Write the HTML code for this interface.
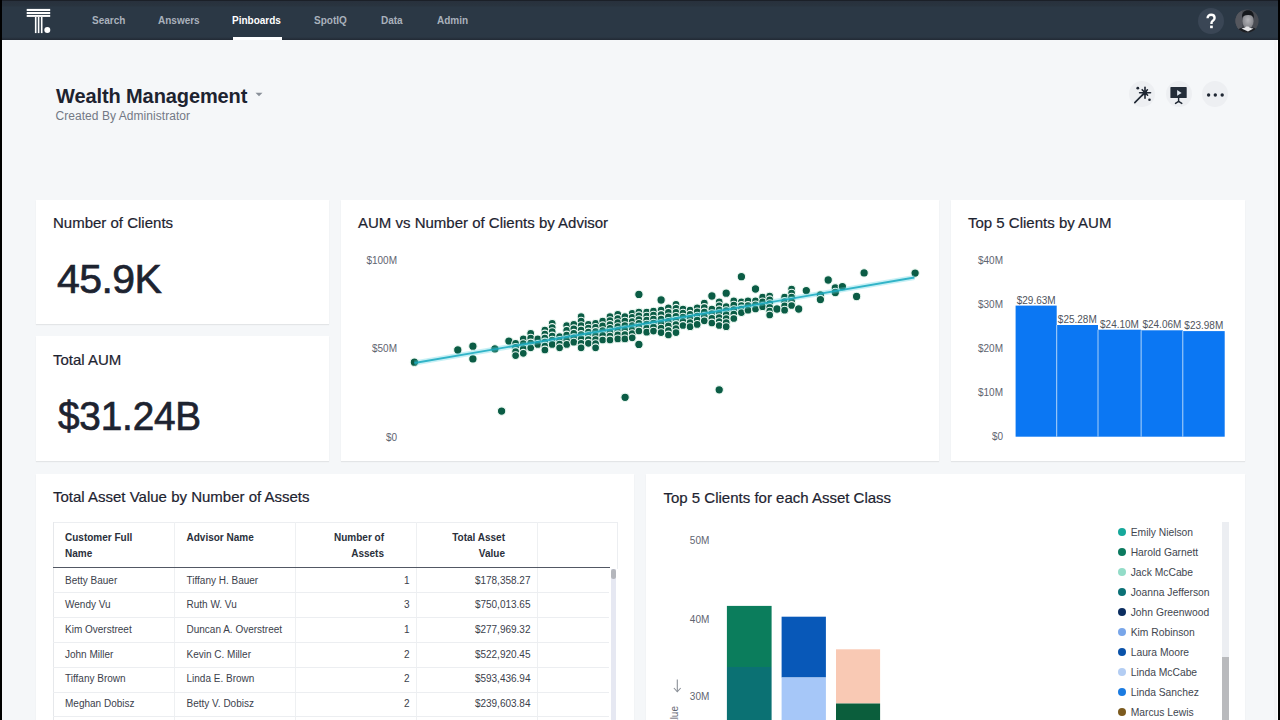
<!DOCTYPE html>
<html><head><meta charset="utf-8">
<style>
*{margin:0;padding:0;box-sizing:border-box}
html,body{width:1280px;height:720px;overflow:hidden}
body{background:#f5f7f9;font-family:"Liberation Sans",sans-serif;position:relative;color:#1d2330}
.abs{position:absolute}
#lb{left:0;top:0;width:2px;height:720px;background:#000}
#rb{left:1278px;top:0;width:2px;height:720px;background:#000}
#nav{left:2px;top:0;width:1276px;height:40px;background:linear-gradient(#1b2028 0px,#1b2028 1px,#28313d 1px,#29343f 6px,#2b3845 7px,#2b3845 37px,#28333f 38px,#222a34 40px);}
.nv{position:absolute;top:15px;font-size:10px;font-weight:bold;color:#a9b1bc;line-height:12px;white-space:nowrap}
.card{position:absolute;background:#fff;box-shadow:0 1px 1px rgba(0,0,0,0.07)}
.ttl{position:absolute;font-size:15px;color:#1d2330;white-space:nowrap;line-height:18px;-webkit-text-stroke:0.2px #1d2330}
.kpi{position:absolute;font-size:41px;color:#1d2330;white-space:nowrap;line-height:46px;letter-spacing:-0.6px;-webkit-text-stroke:0.7px #1d2330}
.ax{position:absolute;font-size:10px;color:#5f6571;white-space:nowrap;line-height:12px}
</style></head>
<body>
<div id="lb" class="abs"></div>
<div id="rb" class="abs"></div>
<div class="abs" style="left:1273.5px;top:40px;width:3px;height:680px;background:#f2f3f5"></div>
<div class="abs" style="left:1276.5px;top:40px;width:1.5px;height:680px;background:#ffffff"></div>
<div id="nav" class="abs">
  <!-- logo -->
  <svg class="abs" style="left:-2px;top:0px" width="60" height="40" viewBox="0 0 60 40">
    <rect x="26.7" y="8.9" width="23.5" height="2.1" fill="#fff"/>
    <rect x="26.7" y="12" width="23.5" height="2" fill="#fff"/>
    <rect x="26.7" y="14.9" width="23.5" height="2" fill="#fff"/>
    <rect x="34.9" y="17" width="1.6" height="16.1" fill="#fff"/>
    <rect x="37.8" y="17" width="1.6" height="16.1" fill="#fff"/>
    <rect x="40.9" y="17" width="1.6" height="16.1" fill="#fff"/>
    <circle cx="47.3" cy="30" r="3" fill="#fff"/>
  </svg>
  <div class="nv" style="left:90px">Search</div>
  <div class="nv" style="left:156px">Answers</div>
  <div class="nv" style="left:230px;color:#fff">Pinboards</div>
  <div class="abs" style="left:230.6px;top:37px;width:49px;height:3px;background:#fff"></div>
  <div class="nv" style="left:312px">SpotIQ</div>
  <div class="nv" style="left:379px">Data</div>
  <div class="nv" style="left:435px">Admin</div>
  <div class="abs" style="left:1196px;top:7.5px;width:26px;height:26px;border-radius:50%;background:#3a4655"></div>
  <svg class="abs" style="left:1196px;top:7.5px" width="26" height="26" viewBox="0 0 26 26">
    <path d="M9.6 10.2 C9.6 7.9 11.2 6.8 13.1 6.8 C15.1 6.8 16.6 8 16.6 9.9 C16.6 11.5 15.6 12.2 14.6 12.9 C13.8 13.5 13.5 13.9 13.5 15.1 L13.5 15.9" stroke="#fff" stroke-width="2.4" fill="none" stroke-linecap="butt"/>
    <rect x="12.1" y="17.6" width="2.7" height="2.6" fill="#fff"/>
  </svg>
  <svg class="abs" style="left:1232.5px;top:8.5px" width="24" height="24" viewBox="0 0 24 24">
    <defs><clipPath id="av"><circle cx="12" cy="12" r="11.6"/></clipPath>
    <radialGradient id="fg" cx="0.5" cy="0.45" r="0.6"><stop offset="0" stop-color="#b4b4b8"/><stop offset="1" stop-color="#7c7d83"/></radialGradient></defs>
    <g clip-path="url(#av)">
      <rect width="24" height="24" fill="#484b52"/>
      <rect x="0" y="0" width="7" height="24" fill="#55575e"/>
      <ellipse cx="13" cy="12" rx="5.6" ry="7.4" fill="url(#fg)"/>
      <path d="M7 9 C6.6 3.5 9.5 1.2 13 1.2 C16.6 1.2 19.4 3.5 18.8 9.5 C18 6.8 16.5 5.8 13 5.9 C9.6 6 8 6.6 7 9 Z" fill="#15181c"/>
      <path d="M1 24 C2 20.5 5 19 8 18.6 L12.5 20.8 L17.6 18.6 C20 19 22.5 20.5 23.5 24 Z" fill="#1c1f24"/>
      <path d="M6.5 19.5 C9 19 10.5 18.5 11 17.5 L13.5 17.5 C14.5 19 16 19.2 18.5 19.6 L13 22.5 Z" fill="#e6e6e8"/>
    </g>
  </svg>
</div>

<div class="abs" style="left:56px;top:85px;font-size:20px;font-weight:bold;color:#1d2330;line-height:22px;white-space:nowrap;letter-spacing:-0.1px">Wealth Management</div>
<svg class="abs" style="left:254px;top:92px" width="10" height="5"><path d="M1.5 0.8 L8.5 0.8 L5 4.2 Z" fill="#8a9099"/></svg>
<div class="abs" style="left:55.5px;top:108.5px;font-size:12px;color:#737985;line-height:14px;white-space:nowrap;letter-spacing:0.05px">Created By Administrator</div>


<!-- action buttons -->
<div class="abs" style="left:1128.5px;top:80.5px;width:26px;height:26px;border-radius:50%;background:#edeff2"></div>
<div class="abs" style="left:1165.8px;top:80.5px;width:26px;height:26px;border-radius:50%;background:#edeff2"></div>
<div class="abs" style="left:1202px;top:80.5px;width:26px;height:26px;border-radius:50%;background:#edeff2"></div>
<svg class="abs" style="left:1128.5px;top:80.5px" width="26" height="26" viewBox="0 0 26 26">
  <g stroke="#1f2733" stroke-width="1.6" stroke-linecap="round" fill="none">
    <line x1="5.8" y1="21.6" x2="14.2" y2="13.1"/>
    <line x1="16" y1="6.4" x2="16" y2="17.2"/>
    <line x1="10.6" y1="11.8" x2="21.5" y2="11.8"/>
    <line x1="13.2" y1="8.7" x2="18.6" y2="14.2"/>
    <line x1="18.4" y1="8.8" x2="13.4" y2="14.3"/>
  </g>
  <circle cx="16" cy="11.8" r="2.4" fill="#1f2733"/>
  <circle cx="8.8" cy="7.2" r="1.4" fill="#1f2733"/>
  <circle cx="20.5" cy="18.7" r="1.3" fill="#1f2733"/>
</svg>
<svg class="abs" style="left:1165.8px;top:80.5px" width="26" height="26" viewBox="0 0 26 26">
  <rect x="4.4" y="6.1" width="16.3" height="11" rx="0.6" fill="#232c38"/>
  <path d="M11.1 9 L11.1 14.8 L15.6 11.9 Z" fill="#dfe6ee"/>
  <g stroke="#1f2733" stroke-width="1.4" stroke-linecap="round" fill="none">
    <line x1="12.6" y1="17" x2="12.6" y2="20.6"/>
    <line x1="12.6" y1="20.4" x2="9.5" y2="22.4"/>
    <line x1="12.6" y1="20.4" x2="15.8" y2="22.4"/>
  </g>
</svg>
<svg class="abs" style="left:1202px;top:80.5px" width="26" height="26" viewBox="0 0 26 26">
  <circle cx="6.6" cy="14" r="1.7" fill="#1f2733"/>
  <circle cx="13.3" cy="14" r="1.7" fill="#1f2733"/>
  <circle cx="20.2" cy="14" r="1.7" fill="#1f2733"/>
</svg>

<!-- cards -->
<div class="card" style="left:36px;top:200px;width:293px;height:124px">
  <div class="ttl" style="left:17px;top:14px">Number of Clients</div>
  <div class="kpi" style="left:21px;top:56px">45.9K</div>
</div>
<div class="card" style="left:36px;top:336px;width:293px;height:125px">
  <div class="ttl" style="left:17px;top:14.5px">Total AUM</div>
  <div class="kpi" style="left:21.5px;top:57px;letter-spacing:-0.2px;transform:scaleX(0.945);transform-origin:0 0">$31.24B</div>
</div>
<div class="card" style="left:341px;top:200px;width:598px;height:261px">
  <div class="ttl" style="left:17px;top:14px">AUM vs Number of Clients by Advisor</div>
  <div class="ax" style="right:542px;top:55px">$100M</div>
  <div class="ax" style="right:542px;top:143px">$50M</div>
  <div class="ax" style="right:542px;top:232px">$0</div>
  <svg class="abs" style="left:0;top:0" width="598" height="261" viewBox="0 0 598 261">
  <g fill="#0b5c45" stroke="#eef9f3" stroke-width="1.1"><circle cx="73.4" cy="162.2" r="4.2"/><circle cx="116.8" cy="150.0" r="4.2"/><circle cx="131.9" cy="146.2" r="4.2"/><circle cx="131.9" cy="158.9" r="4.2"/><circle cx="153.9" cy="148.9" r="4.2"/><circle cx="160.6" cy="211.1" r="4.2"/><circle cx="167.9" cy="141.1" r="4.2"/><circle cx="174.6" cy="143.3" r="3.9"/><circle cx="174.6" cy="147.4" r="3.9"/><circle cx="174.6" cy="151.5" r="3.9"/><circle cx="174.6" cy="155.6" r="3.9"/><circle cx="182.3" cy="138.9" r="3.9"/><circle cx="182.3" cy="143.7" r="3.9"/><circle cx="182.3" cy="148.5" r="3.9"/><circle cx="182.3" cy="153.3" r="3.9"/><circle cx="189.7" cy="133.3" r="3.9"/><circle cx="189.7" cy="138.1" r="3.9"/><circle cx="189.7" cy="143.0" r="3.9"/><circle cx="189.7" cy="147.8" r="3.9"/><circle cx="196.8" cy="138.9" r="3.9"/><circle cx="196.8" cy="144.4" r="3.9"/><circle cx="203.9" cy="130.0" r="3.9"/><circle cx="203.9" cy="134.0" r="3.9"/><circle cx="203.9" cy="138.0" r="3.9"/><circle cx="203.9" cy="142.0" r="3.9"/><circle cx="203.9" cy="146.0" r="3.9"/><circle cx="203.9" cy="150.0" r="3.9"/><circle cx="211.2" cy="123.3" r="3.9"/><circle cx="211.2" cy="127.5" r="3.9"/><circle cx="211.2" cy="131.7" r="3.9"/><circle cx="211.2" cy="136.0" r="3.9"/><circle cx="211.2" cy="140.2" r="3.9"/><circle cx="211.2" cy="144.4" r="3.9"/><circle cx="218.6" cy="136.7" r="3.9"/><circle cx="218.6" cy="140.4" r="3.9"/><circle cx="218.6" cy="144.1" r="3.9"/><circle cx="218.6" cy="147.8" r="3.9"/><circle cx="225.7" cy="125.6" r="3.9"/><circle cx="225.7" cy="130.3" r="3.9"/><circle cx="225.7" cy="135.0" r="3.9"/><circle cx="225.7" cy="139.7" r="3.9"/><circle cx="225.7" cy="144.4" r="3.9"/><circle cx="232.8" cy="124.4" r="3.9"/><circle cx="232.8" cy="128.8" r="3.9"/><circle cx="232.8" cy="133.3" r="3.9"/><circle cx="232.8" cy="137.8" r="3.9"/><circle cx="232.8" cy="142.2" r="3.9"/><circle cx="240.1" cy="116.7" r="3.9"/><circle cx="240.1" cy="121.1" r="3.9"/><circle cx="240.1" cy="125.6" r="3.9"/><circle cx="240.1" cy="130.0" r="3.9"/><circle cx="240.1" cy="134.5" r="3.9"/><circle cx="240.1" cy="138.9" r="3.9"/><circle cx="240.1" cy="143.4" r="3.9"/><circle cx="240.1" cy="147.8" r="3.9"/><circle cx="247.4" cy="124.4" r="3.9"/><circle cx="247.4" cy="128.2" r="3.9"/><circle cx="247.4" cy="132.0" r="3.9"/><circle cx="247.4" cy="135.7" r="3.9"/><circle cx="247.4" cy="139.5" r="3.9"/><circle cx="247.4" cy="143.3" r="3.9"/><circle cx="254.6" cy="123.3" r="3.9"/><circle cx="254.6" cy="127.4" r="3.9"/><circle cx="254.6" cy="131.5" r="3.9"/><circle cx="254.6" cy="135.6" r="3.9"/><circle cx="254.6" cy="139.6" r="3.9"/><circle cx="254.6" cy="143.7" r="3.9"/><circle cx="254.6" cy="147.8" r="3.9"/><circle cx="261.7" cy="121.1" r="3.9"/><circle cx="261.7" cy="125.8" r="3.9"/><circle cx="261.7" cy="130.6" r="3.9"/><circle cx="261.7" cy="135.3" r="3.9"/><circle cx="261.7" cy="140.0" r="3.9"/><circle cx="269.0" cy="116.7" r="3.9"/><circle cx="269.0" cy="120.6" r="3.9"/><circle cx="269.0" cy="124.5" r="3.9"/><circle cx="269.0" cy="128.4" r="3.9"/><circle cx="269.0" cy="132.2" r="3.9"/><circle cx="269.0" cy="136.1" r="3.9"/><circle cx="269.0" cy="140.0" r="3.9"/><circle cx="276.8" cy="114.4" r="3.9"/><circle cx="276.8" cy="118.5" r="3.9"/><circle cx="276.8" cy="122.6" r="3.9"/><circle cx="276.8" cy="126.6" r="3.9"/><circle cx="276.8" cy="130.7" r="3.9"/><circle cx="276.8" cy="134.8" r="3.9"/><circle cx="276.8" cy="138.9" r="3.9"/><circle cx="283.9" cy="116.7" r="3.9"/><circle cx="283.9" cy="121.1" r="3.9"/><circle cx="283.9" cy="125.6" r="3.9"/><circle cx="283.9" cy="130.0" r="3.9"/><circle cx="283.9" cy="134.5" r="3.9"/><circle cx="283.9" cy="138.9" r="3.9"/><circle cx="284.1" cy="197.3" r="4.2"/><circle cx="291.2" cy="113.3" r="3.9"/><circle cx="291.2" cy="117.4" r="3.9"/><circle cx="291.2" cy="121.5" r="3.9"/><circle cx="291.2" cy="125.6" r="3.9"/><circle cx="291.2" cy="129.6" r="3.9"/><circle cx="291.2" cy="133.7" r="3.9"/><circle cx="291.2" cy="137.8" r="3.9"/><circle cx="297.9" cy="94.4" r="4.2"/><circle cx="297.9" cy="112.0" r="3.9"/><circle cx="297.9" cy="115.8" r="3.9"/><circle cx="297.9" cy="119.6" r="3.9"/><circle cx="297.9" cy="123.4" r="3.9"/><circle cx="297.9" cy="127.2" r="3.9"/><circle cx="297.9" cy="131.0" r="3.9"/><circle cx="297.9" cy="144.4" r="4.2"/><circle cx="305.7" cy="112.2" r="3.9"/><circle cx="305.7" cy="116.2" r="3.9"/><circle cx="305.7" cy="120.2" r="3.9"/><circle cx="305.7" cy="124.2" r="3.9"/><circle cx="305.7" cy="128.2" r="3.9"/><circle cx="305.7" cy="132.2" r="3.9"/><circle cx="312.5" cy="111.1" r="3.9"/><circle cx="312.5" cy="115.1" r="3.9"/><circle cx="312.5" cy="119.1" r="3.9"/><circle cx="312.5" cy="123.1" r="3.9"/><circle cx="312.5" cy="127.1" r="3.9"/><circle cx="312.5" cy="131.1" r="3.9"/><circle cx="320.1" cy="100.0" r="4.2"/><circle cx="320.1" cy="110.0" r="3.9"/><circle cx="320.1" cy="114.5" r="3.9"/><circle cx="320.1" cy="119.0" r="3.9"/><circle cx="320.1" cy="123.6" r="3.9"/><circle cx="320.1" cy="128.1" r="3.9"/><circle cx="320.1" cy="132.6" r="3.9"/><circle cx="327.4" cy="107.8" r="3.9"/><circle cx="327.4" cy="112.3" r="3.9"/><circle cx="327.4" cy="116.9" r="3.9"/><circle cx="327.4" cy="121.4" r="3.9"/><circle cx="327.4" cy="125.9" r="3.9"/><circle cx="327.4" cy="130.5" r="3.9"/><circle cx="327.4" cy="135.0" r="3.9"/><circle cx="335.0" cy="104.3" r="3.9"/><circle cx="335.0" cy="108.3" r="3.9"/><circle cx="335.0" cy="112.4" r="3.9"/><circle cx="335.0" cy="116.4" r="3.9"/><circle cx="335.0" cy="120.5" r="3.9"/><circle cx="335.0" cy="124.5" r="3.9"/><circle cx="335.0" cy="128.6" r="3.9"/><circle cx="335.0" cy="132.6" r="3.9"/><circle cx="342.0" cy="109.0" r="3.9"/><circle cx="342.0" cy="113.1" r="3.9"/><circle cx="342.0" cy="117.2" r="3.9"/><circle cx="342.0" cy="121.4" r="3.9"/><circle cx="342.0" cy="125.5" r="3.9"/><circle cx="349.1" cy="110.2" r="3.9"/><circle cx="349.1" cy="114.3" r="3.9"/><circle cx="349.1" cy="118.4" r="3.9"/><circle cx="349.1" cy="122.6" r="3.9"/><circle cx="349.1" cy="126.7" r="3.9"/><circle cx="356.2" cy="107.8" r="3.9"/><circle cx="356.2" cy="111.9" r="3.9"/><circle cx="356.2" cy="116.1" r="3.9"/><circle cx="356.2" cy="120.2" r="3.9"/><circle cx="356.2" cy="124.4" r="3.9"/><circle cx="363.3" cy="103.1" r="3.9"/><circle cx="363.3" cy="107.5" r="3.9"/><circle cx="363.3" cy="112.0" r="3.9"/><circle cx="363.3" cy="116.4" r="3.9"/><circle cx="363.3" cy="120.8" r="3.9"/><circle cx="370.9" cy="96.0" r="4.2"/><circle cx="370.9" cy="109.0" r="3.9"/><circle cx="370.9" cy="113.7" r="3.9"/><circle cx="370.9" cy="118.3" r="3.9"/><circle cx="370.9" cy="123.0" r="3.9"/><circle cx="378.2" cy="101.9" r="3.9"/><circle cx="378.2" cy="105.8" r="3.9"/><circle cx="378.2" cy="109.8" r="3.9"/><circle cx="378.2" cy="113.7" r="3.9"/><circle cx="378.2" cy="117.6" r="3.9"/><circle cx="378.2" cy="121.6" r="3.9"/><circle cx="378.2" cy="125.5" r="3.9"/><circle cx="378.2" cy="189.8" r="4.2"/><circle cx="385.2" cy="93.2" r="4.2"/><circle cx="385.2" cy="106.7" r="3.9"/><circle cx="385.2" cy="110.7" r="3.9"/><circle cx="385.2" cy="114.7" r="3.9"/><circle cx="385.2" cy="118.7" r="3.9"/><circle cx="385.2" cy="122.7" r="3.9"/><circle cx="385.2" cy="126.7" r="3.9"/><circle cx="392.8" cy="100.8" r="3.9"/><circle cx="392.8" cy="105.2" r="3.9"/><circle cx="392.8" cy="109.6" r="3.9"/><circle cx="392.8" cy="114.1" r="3.9"/><circle cx="392.8" cy="118.5" r="3.9"/><circle cx="400.4" cy="76.7" r="4.2"/><circle cx="400.4" cy="101.9" r="3.9"/><circle cx="400.4" cy="105.5" r="3.9"/><circle cx="400.4" cy="109.0" r="3.9"/><circle cx="400.4" cy="112.6" r="3.9"/><circle cx="407.0" cy="100.8" r="3.9"/><circle cx="407.0" cy="105.5" r="3.9"/><circle cx="407.0" cy="110.2" r="3.9"/><circle cx="414.5" cy="89.0" r="4.2"/><circle cx="414.5" cy="100.8" r="3.9"/><circle cx="414.5" cy="104.9" r="3.9"/><circle cx="414.5" cy="109.0" r="3.9"/><circle cx="421.6" cy="97.2" r="3.9"/><circle cx="421.6" cy="101.9" r="3.9"/><circle cx="421.6" cy="106.7" r="3.9"/><circle cx="428.7" cy="96.0" r="3.9"/><circle cx="428.7" cy="99.8" r="3.9"/><circle cx="428.7" cy="103.6" r="3.9"/><circle cx="428.7" cy="107.4" r="3.9"/><circle cx="428.7" cy="111.2" r="3.9"/><circle cx="428.7" cy="115.0" r="3.9"/><circle cx="436.0" cy="109.0" r="4.2"/><circle cx="443.6" cy="97.2" r="3.9"/><circle cx="443.6" cy="101.5" r="3.9"/><circle cx="443.6" cy="105.9" r="3.9"/><circle cx="443.6" cy="110.2" r="3.9"/><circle cx="450.6" cy="89.0" r="3.9"/><circle cx="450.6" cy="93.1" r="3.9"/><circle cx="450.6" cy="97.2" r="3.9"/><circle cx="450.6" cy="101.4" r="3.9"/><circle cx="450.6" cy="105.5" r="3.9"/><circle cx="457.7" cy="109.0" r="4.2"/><circle cx="465.3" cy="90.6" r="4.2"/><circle cx="479.4" cy="94.9" r="4.2"/><circle cx="479.4" cy="99.6" r="4.2"/><circle cx="487.2" cy="80.0" r="4.2"/><circle cx="494.3" cy="87.8" r="4.2"/><circle cx="494.3" cy="92.5" r="4.2"/><circle cx="501.4" cy="86.6" r="4.2"/><circle cx="515.6" cy="96.5" r="4.2"/><circle cx="523.1" cy="72.9" r="4.2"/><circle cx="574.1" cy="73.1" r="4.2"/></g>
  <line x1="73.39999999999998" y1="163" x2="573.4" y2="77.5" stroke="#5fd3e3" stroke-width="5" stroke-opacity="0.35"/>
  <line x1="73.39999999999998" y1="163" x2="573.4" y2="77.5" stroke="#17a9bf" stroke-width="1.8" stroke-opacity="0.85"/>
</svg>
</div>
<div class="card" style="left:951px;top:200px;width:294px;height:261px">
  <div class="ttl" style="left:17px;top:14px">Top 5 Clients by AUM</div>
  <div class="ax" style="right:242px;top:55px">$40M</div>
  <div class="ax" style="right:242px;top:99px">$30M</div>
  <div class="ax" style="right:242px;top:143px">$20M</div>
  <div class="ax" style="right:242px;top:187px">$10M</div>
  <div class="ax" style="right:242px;top:231px">$0</div>
  <svg class="abs" style="left:0;top:0" width="294" height="261"><g fill="#0b77f3"><rect x="64.6" y="105.6" width="41.1" height="131.1"/><rect x="105.7" y="125.0" width="41.3" height="111.7"/><rect x="147.0" y="129.7" width="43.1" height="107.0"/><rect x="190.1" y="130.3" width="41.7" height="106.4"/><rect x="231.8" y="131.1" width="41.9" height="105.6"/></g><rect x="105.2" y="125.0" width="1" height="111.7" fill="#a8cff8"/><rect x="146.5" y="129.7" width="1" height="107.0" fill="#a8cff8"/><rect x="189.6" y="130.3" width="1" height="106.4" fill="#a8cff8"/><rect x="231.3" y="131.1" width="1" height="105.6" fill="#a8cff8"/></svg>
  <div class="ax" style="left:60.2px;width:50px;text-align:center;top:94.6px;color:#4f545d">$29.63M</div><div class="ax" style="left:101.3px;width:50px;text-align:center;top:114.0px;color:#4f545d">$25.28M</div><div class="ax" style="left:143.5px;width:50px;text-align:center;top:118.7px;color:#4f545d">$24.10M</div><div class="ax" style="left:185.9px;width:50px;text-align:center;top:119.3px;color:#4f545d">$24.06M</div><div class="ax" style="left:227.8px;width:50px;text-align:center;top:120.1px;color:#4f545d">$23.98M</div>
</div>
<div class="card" style="left:36px;top:474px;width:598px;height:260px">
  <div class="ttl" style="left:17px;top:14px">Total Asset Value by Number of Assets</div>
  <div class="abs" style="left:17px;top:47.5px;width:564px;height:1px;background:#eceef1"></div>
  <div class="abs" style="left:16.5px;top:47.5px;width:1px;height:250px;background:#e6e8eb"></div>
  <div class="abs" style="left:580.5px;top:47.5px;width:1px;height:47px;background:#eceef1"></div>
  <div class="abs" style="left:138px;top:48px;width:1px;height:250px;background:#eef0f2"></div>
  <div class="abs" style="left:259px;top:48px;width:1px;height:250px;background:#eef0f2"></div>
  <div class="abs" style="left:380px;top:48px;width:1px;height:250px;background:#eef0f2"></div>
  <div class="abs" style="left:501px;top:48px;width:1px;height:250px;background:#eef0f2"></div>
  <div class="abs" style="left:17px;top:92.60000000000002px;width:557px;height:1.6px;background:#525864"></div>
  <div class="abs" style="left:17px;top:118.0px;width:556px;height:1px;background:#eceef1"></div>
  <div class="abs" style="left:17px;top:143.0px;width:556px;height:1px;background:#eceef1"></div>
  <div class="abs" style="left:17px;top:167.8px;width:556px;height:1px;background:#eceef1"></div>
  <div class="abs" style="left:17px;top:192.6px;width:556px;height:1px;background:#eceef1"></div>
  <div class="abs" style="left:17px;top:217.6px;width:556px;height:1px;background:#eceef1"></div>
  <div class="abs" style="left:17px;top:242.0px;width:556px;height:1px;background:#eceef1"></div>
  <div style="position:absolute;font-size:10px;font-weight:bold;color:#2a303b;line-height:16px;white-space:nowrap;left:29px;top:55.9px">Customer Full<br>Name</div>
  <div style="position:absolute;font-size:10px;font-weight:bold;color:#2a303b;line-height:16px;white-space:nowrap;left:150.5px;top:55.9px">Advisor Name</div>
  <div style="position:absolute;font-size:10px;font-weight:bold;color:#2a303b;line-height:16px;white-space:nowrap;right:250px;top:55.9px;text-align:right">Number of<br>Assets</div>
  <div style="position:absolute;font-size:10px;font-weight:bold;color:#2a303b;line-height:16px;white-space:nowrap;right:129px;top:55.9px;text-align:right">Total Asset<br>Value</div>
  <div style="position:absolute;font-size:10px;color:#3b414c;line-height:16px;white-space:nowrap;left:29px;top:98.6px">Betty Bauer</div>
  <div style="position:absolute;font-size:10px;color:#3b414c;line-height:16px;white-space:nowrap;left:150.5px;top:98.6px">Tiffany H. Bauer</div>
  <div style="position:absolute;font-size:10px;color:#3b414c;line-height:16px;white-space:nowrap;right:224.5px;top:98.6px">1</div>
  <div style="position:absolute;font-size:10px;color:#3b414c;line-height:16px;white-space:nowrap;right:103.5px;top:98.6px">$178,358.27</div>
  <div style="position:absolute;font-size:10px;color:#3b414c;line-height:16px;white-space:nowrap;left:29px;top:123.3px">Wendy Vu</div>
  <div style="position:absolute;font-size:10px;color:#3b414c;line-height:16px;white-space:nowrap;left:150.5px;top:123.3px">Ruth W. Vu</div>
  <div style="position:absolute;font-size:10px;color:#3b414c;line-height:16px;white-space:nowrap;right:224.5px;top:123.3px">3</div>
  <div style="position:absolute;font-size:10px;color:#3b414c;line-height:16px;white-space:nowrap;right:103.5px;top:123.3px">$750,013.65</div>
  <div style="position:absolute;font-size:10px;color:#3b414c;line-height:16px;white-space:nowrap;left:29px;top:148.0px">Kim Overstreet</div>
  <div style="position:absolute;font-size:10px;color:#3b414c;line-height:16px;white-space:nowrap;left:150.5px;top:148.0px">Duncan A. Overstreet</div>
  <div style="position:absolute;font-size:10px;color:#3b414c;line-height:16px;white-space:nowrap;right:224.5px;top:148.0px">1</div>
  <div style="position:absolute;font-size:10px;color:#3b414c;line-height:16px;white-space:nowrap;right:103.5px;top:148.0px">$277,969.32</div>
  <div style="position:absolute;font-size:10px;color:#3b414c;line-height:16px;white-space:nowrap;left:29px;top:172.6px">John Miller</div>
  <div style="position:absolute;font-size:10px;color:#3b414c;line-height:16px;white-space:nowrap;left:150.5px;top:172.6px">Kevin C. Miller</div>
  <div style="position:absolute;font-size:10px;color:#3b414c;line-height:16px;white-space:nowrap;right:224.5px;top:172.6px">2</div>
  <div style="position:absolute;font-size:10px;color:#3b414c;line-height:16px;white-space:nowrap;right:103.5px;top:172.6px">$522,920.45</div>
  <div style="position:absolute;font-size:10px;color:#3b414c;line-height:16px;white-space:nowrap;left:29px;top:197.3px">Tiffany Brown</div>
  <div style="position:absolute;font-size:10px;color:#3b414c;line-height:16px;white-space:nowrap;left:150.5px;top:197.3px">Linda E. Brown</div>
  <div style="position:absolute;font-size:10px;color:#3b414c;line-height:16px;white-space:nowrap;right:224.5px;top:197.3px">2</div>
  <div style="position:absolute;font-size:10px;color:#3b414c;line-height:16px;white-space:nowrap;right:103.5px;top:197.3px">$593,436.94</div>
  <div style="position:absolute;font-size:10px;color:#3b414c;line-height:16px;white-space:nowrap;left:29px;top:222.0px">Meghan Dobisz</div>
  <div style="position:absolute;font-size:10px;color:#3b414c;line-height:16px;white-space:nowrap;left:150.5px;top:222.0px">Betty V. Dobisz</div>
  <div style="position:absolute;font-size:10px;color:#3b414c;line-height:16px;white-space:nowrap;right:224.5px;top:222.0px">2</div>
  <div style="position:absolute;font-size:10px;color:#3b414c;line-height:16px;white-space:nowrap;right:103.5px;top:222.0px">$239,603.84</div>
  <div class="abs" style="left:574.5px;top:95px;width:5.5px;height:200px;background:#e6e8f2"></div>
  <div class="abs" style="left:574.5px;top:95px;width:5.5px;height:9.5px;border-radius:3px;background:#b4b6bc"></div>
</div>
<div class="card" style="left:646px;top:474px;width:599px;height:260px">
  <div class="ttl" style="left:17.5px;top:14.5px">Top 5 Clients for each Asset Class</div>
  <div style="position:absolute;font-size:10px;color:#5f6571;white-space:nowrap;line-height:12px;right:535.7px;top:60.6px">50M</div>
  <div style="position:absolute;font-size:10px;color:#5f6571;white-space:nowrap;line-height:12px;right:535.7px;top:139.8px">40M</div>
  <div style="position:absolute;font-size:10px;color:#5f6571;white-space:nowrap;line-height:12px;right:535.7px;top:216.8px">30M</div>
  <svg class="abs" style="left:0;top:0" width="599" height="260"><rect x="80.9" y="131.9" width="44.7" height="61.1" fill="#0b7d5c"/><rect x="80.9" y="193.0" width="44.7" height="67.0" fill="#0b7173"/><rect x="135.6" y="142.7" width="44.3" height="60.8" fill="#0858b8"/><rect x="135.6" y="203.5" width="44.3" height="56.5" fill="#a6c7f8"/><rect x="190.0" y="175.3" width="44.1" height="54.2" fill="#f9c9b4"/><rect x="190.0" y="229.5" width="44.1" height="30.5" fill="#0b5e3c"/><g stroke="#8a8f97" stroke-width="1.1" fill="none"><line x1="31.299999999999955" y1="205.5" x2="31.299999999999955" y2="217.5"/><path d="M27.899999999999977 214 L31.299999999999955 217.79999999999995 L34.700000000000045 214"/></g></svg>
  <div style="position:absolute;font-size:10px;color:#5f6571;line-height:12px;white-space:nowrap;left:22.6px;top:231.5px;transform-origin:0 0;transform:rotate(-90deg) translate(-40px,0);width:40px;text-align:right">Value</div>
  <div class="abs" style="left:471.9px;top:53.7px;width:8.6px;height:8.6px;border-radius:50%;background:#16a89b"></div>
  <div style="position:absolute;font-size:10.3px;color:#41464f;line-height:12px;white-space:nowrap;left:484.7px;top:52.5px">Emily Nielson</div>
  <div class="abs" style="left:471.9px;top:73.7px;width:8.6px;height:8.6px;border-radius:50%;background:#0b7a5f"></div>
  <div style="position:absolute;font-size:10.3px;color:#41464f;line-height:12px;white-space:nowrap;left:484.7px;top:72.5px">Harold Garnett</div>
  <div class="abs" style="left:471.9px;top:93.7px;width:8.6px;height:8.6px;border-radius:50%;background:#93dcc8"></div>
  <div style="position:absolute;font-size:10.3px;color:#41464f;line-height:12px;white-space:nowrap;left:484.7px;top:92.5px">Jack McCabe</div>
  <div class="abs" style="left:471.9px;top:113.7px;width:8.6px;height:8.6px;border-radius:50%;background:#0b7176"></div>
  <div style="position:absolute;font-size:10.3px;color:#41464f;line-height:12px;white-space:nowrap;left:484.7px;top:112.5px">Joanna Jefferson</div>
  <div class="abs" style="left:471.9px;top:133.7px;width:8.6px;height:8.6px;border-radius:50%;background:#0b2d60"></div>
  <div style="position:absolute;font-size:10.3px;color:#41464f;line-height:12px;white-space:nowrap;left:484.7px;top:132.5px">John Greenwood</div>
  <div class="abs" style="left:471.9px;top:153.7px;width:8.6px;height:8.6px;border-radius:50%;background:#79a6e9"></div>
  <div style="position:absolute;font-size:10.3px;color:#41464f;line-height:12px;white-space:nowrap;left:484.7px;top:152.5px">Kim Robinson</div>
  <div class="abs" style="left:471.9px;top:173.7px;width:8.6px;height:8.6px;border-radius:50%;background:#0a52a9"></div>
  <div style="position:absolute;font-size:10.3px;color:#41464f;line-height:12px;white-space:nowrap;left:484.7px;top:172.5px">Laura Moore</div>
  <div class="abs" style="left:471.9px;top:193.7px;width:8.6px;height:8.6px;border-radius:50%;background:#b3cdf3"></div>
  <div style="position:absolute;font-size:10.3px;color:#41464f;line-height:12px;white-space:nowrap;left:484.7px;top:192.5px">Linda McCabe</div>
  <div class="abs" style="left:471.9px;top:213.7px;width:8.6px;height:8.6px;border-radius:50%;background:#1a7be1"></div>
  <div style="position:absolute;font-size:10.3px;color:#41464f;line-height:12px;white-space:nowrap;left:484.7px;top:212.5px">Linda Sanchez</div>
  <div class="abs" style="left:471.9px;top:233.7px;width:8.6px;height:8.6px;border-radius:50%;background:#7c5b1f"></div>
  <div style="position:absolute;font-size:10.3px;color:#41464f;line-height:12px;white-space:nowrap;left:484.7px;top:232.5px">Marcus Lewis</div>
  <div class="abs" style="left:576.4px;top:48px;width:6.3px;height:250px;background:#eceef2"></div>
  <div class="abs" style="left:576.4px;top:183.3px;width:6.3px;height:100px;background:#b9babd"></div>
</div>

</body></html>
